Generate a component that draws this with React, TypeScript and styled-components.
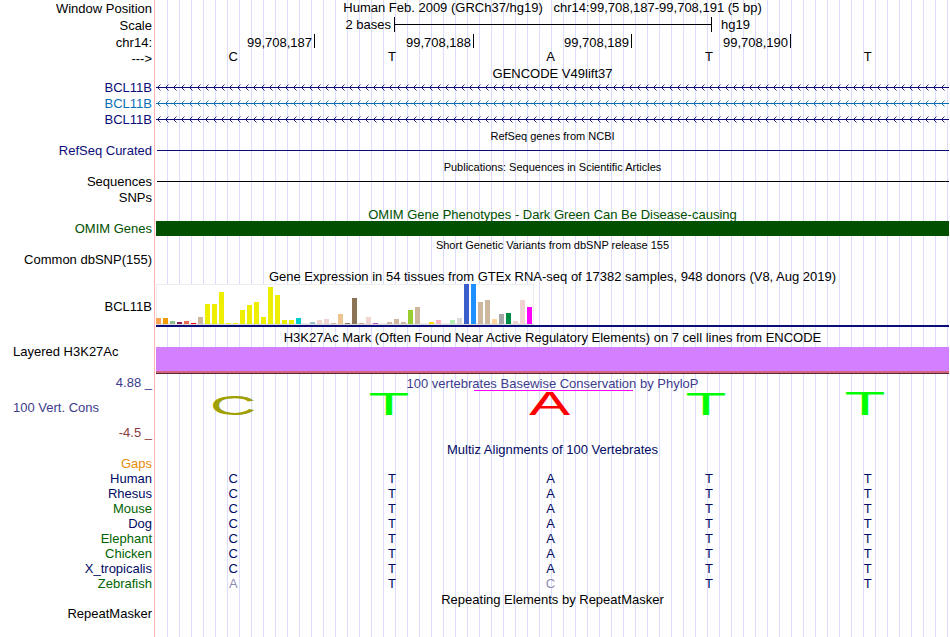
import styled, { createGlobalStyle } from 'styled-components';

const NAVY = '#0c0c78';
const ALIGN_BLUE = '#000a64';
const ALIGN_GREEN = '#006400';
const MISMATCH = '#8c8cb4';

const GlobalStyle = createGlobalStyle`
  body {
    margin: 0;
    background-color: white;
    font-family: "Liberation Sans", Arial, Helvetica, sans-serif;
    font-size: 13px;
    line-height: 15px;
    color: black;
  }
`;

const Browser = styled.main`
  display: flex;
  width: 949px;
  height: 637px;
  overflow: hidden;
`;

const Labels = styled.aside`
  display: flex;
  flex-direction: column;
  box-sizing: border-box;
  width: 155px;
  flex-shrink: 0;
  padding: 0 2px 0 13px;
  margin-right: 1px;
  border-right: 1px solid #ffb4b4;
`;

const Label = styled.div<{ $gap?: number; $color?: string; $left?: boolean; $spacing?: number }>`
  height: 15px;
  margin-top: ${({ $gap = 0 }) => $gap}px;
  color: ${({ $color = 'black' }) => $color};
  text-align: ${({ $left }) => ($left ? 'left' : 'right')};
  letter-spacing: ${({ $spacing = 0 }) => $spacing}px;
  white-space: pre;
`;

const Tracks = styled.section`
  display: flex;
  flex-direction: column;
  width: 793px;
  background-image: repeating-linear-gradient(
    to right, transparent 0, transparent 11px, #dcdcff 11px, #dcdcff 12px
  );
`;

const Title = styled.h2<{ $gap?: number; $color?: string; $small?: boolean; $short?: boolean; $spacing?: number }>`
  height: ${({ $short }) => ($short ? 14 : 15)}px;
  margin: ${({ $gap = 0 }) => $gap}px 0 0;
  font-size: ${({ $small }) => ($small ? 11 : 13)}px;
  font-weight: normal;
  color: ${({ $color = 'black' }) => $color};
  letter-spacing: ${({ $spacing = 0 }) => $spacing}px;
  text-align: center;
  white-space: pre;
`;

const ScaleRow = styled.div`
  display: flex;
  height: 15px;
  margin-top: 2px;

  .size {
    width: 235px;
    margin-right: 3px;
    text-align: right;
  }

  .assembly {
    margin-left: 9px;
  }
`;

const ScaleBar = styled.div`
  display: flex;
  align-items: center;
  box-sizing: border-box;
  width: 318px;
  border: solid black;
  border-width: 0 1px;

  &::before {
    content: '';
    flex: 1;
    height: 1px;
    background-color: black;
  }
`;

const Positions = styled.div`
  display: grid;
  grid-template-columns: 159px 159px 158px 159px 158px;
  margin-top: 2px;
  height: 15px;
`;

const Position = styled.span`
  height: 14px;
  padding-right: 2px;
  border-right: 1px solid black;
  line-height: 17px;
  text-align: right;
`;

const Bases = styled.div<{ $gap?: number; $color?: string }>`
  display: grid;
  grid-template-columns: repeat(5, 1fr);
  height: 15px;
  margin-top: ${({ $gap = 0 }) => $gap}px;
  padding-right: 4px;
  margin-left: -2px;
  margin-right: -2px;
  color: ${({ $color = 'black' }) => $color};
  text-align: center;
`;

const Base = styled.span<{ $mismatch?: boolean }>`
  color: ${({ $mismatch }) => ($mismatch ? MISMATCH : 'inherit')};
`;

const Intron = styled.svg<{ $gap: number }>`
  display: block;
  flex-shrink: 0;
  height: 7px;
  width: 793px;
  margin-top: ${({ $gap }) => $gap}px;
`;

const Line = styled.div<{ $gap: number; $color: string }>`
  height: 1px;
  margin-top: ${({ $gap }) => $gap}px;
  margin-left: 1px;
  background-color: ${({ $color }) => $color};
`;

const OmimBar = styled.div`
  height: 15px;
  background-color: #005000;
`;

const Expression = styled.div`
  height: 41px;
  border-bottom: 2px solid ${NAVY};
`;

const BarGraph = styled.div`
  display: flex;
  align-items: flex-end;
  gap: 2px;
  box-sizing: border-box;
  width: 378px;
  height: 41px;
  background-color: white;
  box-shadow: inset 0 0 0 1px #eee;
  border-bottom: 1px solid #ddd;
`;

const Bar = styled.span<{ $color: string }>`
  width: 5px;
  background-color: ${({ $color }) => $color};
`;

const Histone = styled.div`
  height: 24px;
  margin-top: 2px;
  background-color: #d280ff;
  border-bottom: 2px solid #d26482;
  box-shadow: 0 1px 0 #5a2832;
`;

const ClipMark = styled.div`
  width: 159px;
  height: 1px;
  margin-left: 318px;
  background-color: #ff00ff;
`;

const Logo = styled.div`
  display: flex;
  align-items: flex-end;
  height: 24px;
`;

const LogoBase = styled.svg<{ $gap: number; $width: number; $height: number }>`
  width: ${({ $width }) => $width}px;
  height: ${({ $height }) => $height}px;
  margin-left: ${({ $gap }) => $gap}px;
  overflow: visible;
  font-size: 100px;
`;

const labels = [
  { text: 'Window Position', gap: 1 },
  { text: 'Scale', gap: 2 },
  { text: 'chr14:', gap: 2 },
  { text: '--->', gap: 1 },
  { text: 'BCL11B', gap: 14, color: NAVY },
  { text: 'BCL11B', gap: 1, color: '#0b6eb4' },
  { text: 'BCL11B', gap: 1, color: NAVY },
  { text: 'RefSeq Curated', gap: 16, color: NAVY },
  { text: 'Sequences', gap: 16 },
  { text: 'SNPs', gap: 1 },
  { text: 'OMIM Genes', gap: 16, color: '#005000' },
  { text: 'Common dbSNP(155)', gap: 16 },
  { text: 'BCL11B', gap: 32 },
  { text: 'Layered H3K27Ac', gap: 30, left: true },
  { text: '4.88 _', gap: 16, color: '#3c3c8c' },
  { text: '100 Vert. Cons', gap: 10, color: '#3c3c8c', left: true },
  { text: '-4.5 _', gap: 10, color: '#8c3c3c' },
  { text: 'Gaps', gap: 16, color: '#e68c0a' },
  { text: 'Human', color: ALIGN_BLUE },
  { text: 'Rhesus', color: ALIGN_BLUE },
  { text: 'Mouse', color: ALIGN_GREEN },
  { text: 'Dog', color: ALIGN_BLUE },
  { text: 'Elephant', color: ALIGN_GREEN },
  { text: 'Chicken', color: ALIGN_GREEN },
  { text: 'X_tropicalis', color: ALIGN_BLUE },
  { text: 'Zebrafish', color: ALIGN_GREEN },
  { text: 'RepeatMasker', gap: 15 },
];

const positions = ['99,708,187', '99,708,188', '99,708,189', '99,708,190'];

const reference = 'CTATT';

const alignments = ['CTATT', 'CTATT', 'CTATT', 'CTATT', 'CTATT', 'CTATT', 'CTATT', 'ATCTT'];

const YELLOW = '#eeee00';
const TAN = '#cdb79e';
const ROSE = '#eed5d2';

// [height in px, colour] for the 54 GTEx tissues
const tissues: [number, string][] = [
  [6, '#ffa54f'], [6, '#ee9a00'], [3, '#8fbc8f'], [2, '#8b1c62'], [3, '#ee6a50'], [1, '#ff0000'],
  [7, TAN], [20, YELLOW], [20, YELLOW], [32, YELLOW], [1, YELLOW], [1, YELLOW],
  [14, YELLOW], [19, YELLOW], [22, YELLOW], [7, YELLOW], [37, YELLOW], [29, YELLOW],
  [4, YELLOW], [4, YELLOW], [6, '#00cdcd'], [0, '#ee82ee'], [2, '#9ac0cd'], [4, ROSE],
  [5, ROSE], [1, TAN], [10, '#eec591'], [1, '#8b7355'], [26, '#8b7355'], [1, '#cdaa7d'],
  [7, ROSE], [1, '#b452cd'], [0, '#7a378b'], [2, TAN], [5, TAN], [2, TAN],
  [14, '#9acd32'], [17, TAN], [0, '#7a67ee'], [2, '#ffd700'], [4, '#ffb6c1'], [0, '#cd9b1d'],
  [4, '#b4eeb4'], [6, '#d9d9d9'], [40, '#3a5fcd'], [40, '#1e90ff'], [22, TAN], [24, TAN],
  [5, '#ffd39b'], [10, '#a6a6a6'], [11, '#008b45'], [3, ROSE], [24, ROSE], [17, '#ff00ff'],
];

// ink boxes of the capitals at a 100px font size
const inkBoxes: Record<string, string> = {
  A: '0.2 -68.8 66.3 68.8',
  C: '5 -69.8 63.3 70.8',
  T: '2.2 -68.8 56.7 68.8',
};

const logo = [
  { base: 'C', color: '#a0a000', gap: 57, width: 41, height: 20 },
  { base: 'T', color: '#00ff00', gap: 116, width: 38, height: 21 },
  { base: 'A', color: '#ff0000', gap: 121, width: 41, height: 23 },
  { base: 'T', color: '#00ff00', gap: 117, width: 38, height: 21 },
  { base: 'T', color: '#00ff00', gap: 121, width: 38, height: 23 },
];

const chevrons = Array.from({ length: 99 }, (_, i) => 1.5 + i * 8);

const GeneTrack = ({ gap, color }: { gap: number; color: string }) => (
  <Intron $gap={gap} viewBox="0 0 793 7" fill="none" stroke={color}>
    <path d="M0 3.5H793" />
    <path
      d={chevrons.map((x) => `M${x + 3} 0.5L${x} 3.5L${x + 3} 6.5`).join('')}
      strokeWidth="0.9"
    />
  </Intron>
);

const App = () => (
  <>
    <GlobalStyle />
    <Browser>
      <Labels>
        {labels.map(({ text, gap, color, left }, i) => (
          <Label key={i} $gap={gap} $color={color} $left={left}>{text}</Label>
        ))}
      </Labels>

      <Tracks>
        <Title>{'Human Feb. 2009 (GRCh37/hg19)   chr14:99,708,187-99,708,191 (5 bp)'}</Title>
        <ScaleRow>
          <span className="size">2 bases</span>
          <ScaleBar />
          <span className="assembly">hg19</span>
        </ScaleRow>
        <Positions>
          {positions.map((e) => <Position key={e}>{e}</Position>)}
        </Positions>
        <Bases>
          {reference.split('').map((e, i) => <Base key={i}>{e}</Base>)}
        </Bases>

        <Title $gap={2}>GENCODE V49lift37</Title>
        <GeneTrack gap={3} color={NAVY} />
        <GeneTrack gap={9} color="#0b6eb4" />
        <GeneTrack gap={9} color={NAVY} />

        <Title $small $gap={6}>RefSeq genes from NCBI</Title>
        <Line $gap={6} $color={NAVY} />
        <Title $small $gap={9}>Publications: Sequences in Scientific Articles</Title>
        <Line $gap={6} $color="black" />

        <Title $short $gap={25} $color="#005000">
          OMIM Gene Phenotypes - Dark Green Can Be Disease-causing
        </Title>
        <OmimBar />
        <Title $small $gap={2}>Short Genetic Variants from dbSNP release 155</Title>

        <Title $gap={16}>
          Gene Expression in 54 tissues from GTEx RNA-seq of 17382 samples, 948 donors (V8, Aug 2019)
        </Title>
        <Expression>
          <BarGraph>
            {tissues.map(([height, color], i) => (
              <Bar key={i} $color={color} style={{ height }} />
            ))}
          </BarGraph>
        </Expression>

        <Title $gap={3}>
          H3K27Ac Mark (Often Found Near Active Regulatory Elements) on 7 cell lines from ENCODE
        </Title>
        <Histone />

        <Title $short $gap={3} $color="#3c3c8c">100 vertebrates Basewise Conservation by PhyloP</Title>
        <ClipMark />
        <Logo>
          {logo.map(({ base, color, gap, width, height }, i) => (
            <LogoBase
              key={i}
              $gap={gap}
              $width={width}
              $height={height}
              viewBox={inkBoxes[base]}
              preserveAspectRatio="none"
              fill={color}
            >
              <text>{base}</text>
            </LogoBase>
          ))}
        </Logo>

        <Title $gap={27} $color={ALIGN_BLUE}>Multiz Alignments of 100 Vertebrates</Title>
        {alignments.map((row, i) => (
          <Bases key={i} $gap={i === 0 ? 14 : 0} $color={ALIGN_BLUE}>
            {row.split('').map((e, j) => (
              <Base key={j} $mismatch={e !== reference[j]}>{e}</Base>
            ))}
          </Bases>
        ))}

        <Title $gap={1}>Repeating Elements by RepeatMasker</Title>
      </Tracks>
    </Browser>
  </>
);

export default App;
